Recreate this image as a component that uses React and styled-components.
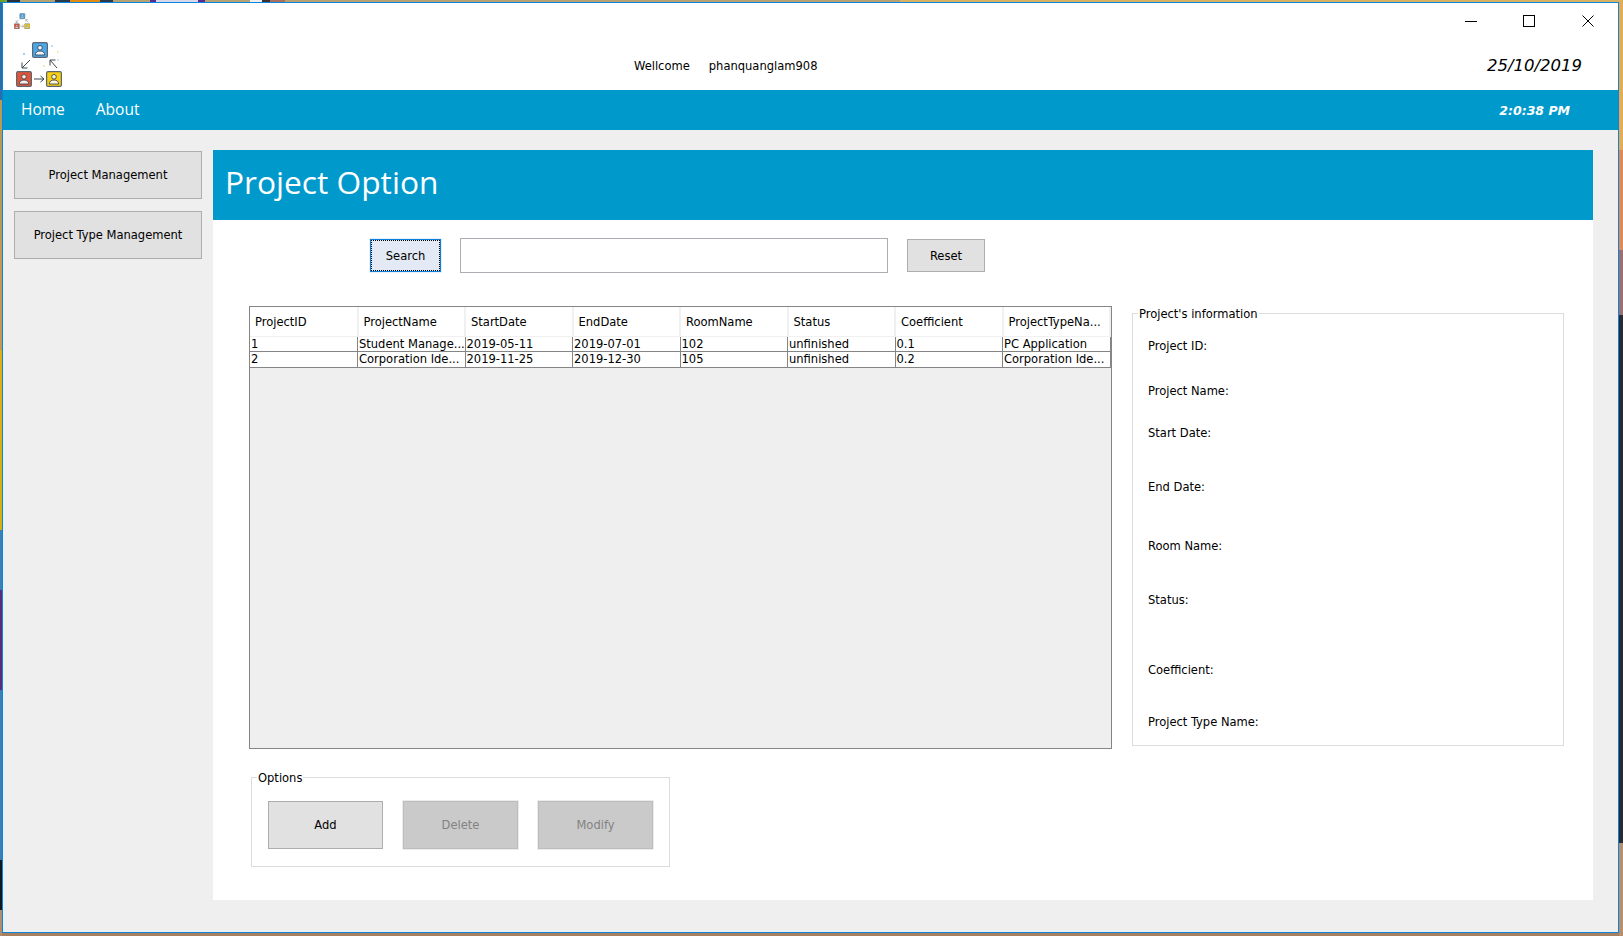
import React from "react";
import styled, { createGlobalStyle } from "styled-components";

const Global = createGlobalStyle`
  html, body { margin: 0; padding: 0; height: 100%; overflow: hidden; }
  body {
    font-family: "DejaVu Sans Condensed", "DejaVu Sans", sans-serif;
    font-stretch: condensed;
    font-size: 12.8px;
    color: #000;
    background:
      linear-gradient(90deg, #6aa51f 0 5px, #8a9a5a 5px 7px, #26303a 7px 20px, #b5a272 20px 55px, #2b3a4a 55px 70px, #e08c14 70px 100px, #2b3a4a 100px 113px, #b5a272 113px 150px, #5a2a8c 150px 156px, #d8d8ea 156px 198px, #5a2a8c 198px 205px, #b5a272 205px 250px, #eee 250px 262px, #3a3030 262px 270px, #a87060 270px 285px, #b8a070 285px 900px, #d8b262 900px) 0 0 / 100% 2px no-repeat,
      linear-gradient(180deg, #2a6ea8 0 100px, #b89a58 100px 240px, #c49a50 240px 350px, #e0b010 350px 440px, #d4b010 440px 530px, #3a7fb5 530px 590px, #5a2a7c 590px 690px, #3a7fb5 690px 860px, #101820 860px 910px, #b08d6c 910px) 0 0 / 2px 100% no-repeat,
      linear-gradient(180deg, #e2ad55 0 150px, #e08a5a 150px 250px, #9a7070 250px 315px, #2a2a30 315px 843px, #b58f6e 843px) 100% 0 / 4px 100% no-repeat,
      #a9805f;
  }
  #root { height: 100%; }
  * { box-sizing: border-box; }
`;

const Desktop = styled.div`
  height: 100%;
  padding: 2px 4px 3px 2px;
`;
const Window = styled.div`
  height: 100%;
  display: flex;
  flex-direction: column;
  border: 1px solid #0a84dc;
  background: #efefef;
`;
const Header = styled.header`
  height: 87px;
  flex: none;
  background: #fff;
  display: flex;
  flex-direction: column;
`;
const TitleBar = styled.div`
  height: 36px;
  display: flex;
  justify-content: space-between;
  padding: 10px 0 0 11px;
`;
const CaptionButtons = styled.div`
  display: flex;
  align-items: flex-start;
  padding: 2px 0 0;
  margin-right: 24px;
  gap: 46px;
`;
const CaptionIcon = styled.svg`
  width: 12px;
  height: 12px;
  display: block;
  fill: none;
  stroke: #000;
  stroke-width: 1;
`;
const CloseIcon = styled(CaptionIcon)`
  margin-left: 1px;
`;
const Brand = styled.div`
  flex: 1;
  display: grid;
  grid-template-columns: 618px auto 1fr auto;
  padding: 0 36px 0 13px;
  align-items: center;
`;
const Greeting = styled.div`
  display: flex;
  gap: 19px;
  grid-column: 2;
  margin-top: 1px;
`;
const DateText = styled.div`
  grid-column: 4;
  font-family: "DejaVu Sans", sans-serif;
  font-style: italic;
  font-size: 16.5px;
  font-stretch: normal;
  margin-top: 1px;
`;
const Nav = styled.nav`
  height: 40px;
  flex: none;
  background: #0099cc;
  color: #fff;
  display: flex;
  align-items: center;
  padding: 0 48px 0 18px;
`;
const NavItem = styled.span`
  font-family: "Open Sans", sans-serif;
  font-stretch: normal;
  font-size: 15.5px;
  margin-right: 31px;
  margin-top: -2px;
`;
const Clock = styled.span`
  margin-left: auto;
  font-family: "DejaVu Sans", sans-serif;
  font-stretch: normal;
  font-style: italic;
  font-weight: 700;
  font-size: 12.5px;
  margin-top: 1px;
`;
const Body = styled.div`
  flex: 1;
  min-height: 0;
  display: flex;
  padding: 20px 25px 32px 11px;
  gap: 11px;
`;
const Sidebar = styled.aside`
  width: 188px;
  flex: none;
  display: flex;
  flex-direction: column;
  gap: 12px;
  padding-top: 1px;
`;
const Button = styled.button`
  font: inherit;
  font-stretch: condensed;
  color: #000;
  background: #e1e1e1;
  border: 1px solid #adadad;
  padding: 0 0 1px;
  flex: none;
  height: ${(p) => p.$h || 48}px;
  width: ${(p) => (p.$w ? `${p.$w}px` : "auto")};
`;
const FocusButton = styled(Button)`
  background: #e3eaf5;
  border: 1px solid #0a7fdc;
  outline: 1px dotted #000;
  outline-offset: -2px;
  box-shadow: 0 0 0 1px #e6f0fa;
`;
const DisabledButton = styled(Button)`
  background: #cacaca;
  border: 1px solid #bdbdbd;
  box-shadow: 0 0 0 1px #ececec;
  color: #838383;
`;
const Main = styled.main`
  flex: 1;
  min-width: 0;
  background: #fff;
  display: flex;
  flex-direction: column;
`;
const Banner = styled.div`
  height: 70px;
  flex: none;
  background: #0099cc;
  color: #fff;
  display: flex;
  align-items: center;
  padding: 0 0 8px 12px;
  font-family: "Open Sans", sans-serif;
  font-stretch: normal;
  font-size: 31.7px;
`;
const SearchRow = styled.div`
  display: flex;
  align-items: center;
  gap: 19px;
  padding: 18px 0 0 157px;
`;
const SearchInput = styled.input`
  width: 428px;
  height: 35px;
  border: 1px solid #abadb3;
  background: #fff;
`;
const Columns = styled.div`
  display: flex;
  gap: 20px;
  padding: 33px 0 0 36px;
`;
const LeftColumn = styled.div`
  width: 863px;
  flex: none;
`;
const TableBox = styled.div`
  height: 443px;
  border: 1px solid #858585;
  background: #efefef;
`;
const Table = styled.table`
  width: 100%;
  table-layout: fixed;
  border-collapse: collapse;
`;
const Th = styled.th`
  height: 29px;
  background: #fff;
  font-weight: 400;
  text-align: left;
  padding: 0 0 0 5px;
  border-right: 2px solid #f0f0f0;
  border-bottom: 1px solid #f0f0f0;
  white-space: nowrap;
  overflow: hidden;
`;
const Tr = styled.tr`
  height: ${(p) => p.$h}px;
`;
const Td = styled.td`
  background: #fff;
  padding: 0 0 0 1px;
  border-right: 1px solid #858585;
  border-bottom: 1px solid #858585;
  white-space: nowrap;
  overflow: hidden;
  line-height: 14px;
`;
const Group = styled.fieldset`
  margin: 0;
  padding: 0;
  min-width: 0;
  border: 1px solid #dcdcdc;
`;
const Legend = styled.legend`
  margin-left: 5px;
  padding: 2px 1px 0;
  line-height: 14px;
`;
const InfoGroup = styled(Group)`
  width: 432px;
  height: 441px;
  margin-top: -1px;
  flex: none;
`;
const InfoList = styled.div`
  display: flex;
  flex-direction: column;
  padding: 18px 0 0 15px;
`;
const InfoLabel = styled.div`
  height: ${(p) => p.$h}px;
  line-height: 14px;
`;
const OptionsGroup = styled(Group)`
  width: 419px;
  height: 98px;
  margin: 20px 0 0 2px;
`;
const OptionsRow = styled.div`
  display: flex;
  gap: 20px;
  padding: 16px 0 0 16px;
`;
const LogoSvg = styled.svg`
  display: block;
  align-self: start;
  margin-top: ${(p) => p.$top}px;
  width: ${(p) => p.$size}px;
  height: ${(p) => p.$size}px;
`;

const Person = ({ x, y, fill, bg }) => (
  <g transform={`translate(${x} ${y})`}>
    <rect x="0.6" y="0.6" width="14.8" height="14.8" rx="1.5" fill={fill} stroke="#5b6670" strokeWidth="1.2" />
    <circle cx="8" cy="5.8" r="2.3" fill={bg} stroke="#3c4650" strokeWidth="0.9" />
    <path d="M3.3 13c0-2.6 2-4 4.7-4s4.700 1.400 4.700 4z" fill={bg} stroke="#3c4650" strokeWidth="0.9" />
  </g>
);

const Logo = ({ size, top = 0 }) => (
  <LogoSvg $size={size} $top={top} viewBox="0 0 46 46">
    <Person x={16} y={1} fill="#4aa8e8" bg="#eef6fc" />
    <Person x={0} y={30} fill="#e05538" bg="#f7ece8" />
    <Person x={30} y={30} fill="#f6cf10" bg="#fdf8dc" />
    <g fill="none" stroke="#3c4650" strokeWidth="1">
      <path d="M14 19l-8 8M6 21.500V27h5.500" />
      <path d="M41 27l-7-8M34 24.500V19h5.500" />
      <path d="M18 38h10M24.500 35l3.500 3-3.500 3" />
    </g>
    <g>
      <rect x="7" y="12" width="2" height="2" fill="#9dd4f5" />
      <rect x="35" y="4" width="2" height="2" fill="#bfe2f8" />
      <rect x="41" y="10" width="1.500" height="1.500" fill="#f7e07a" />
      <rect x="41" y="18" width="2" height="2" fill="#cfe6f7" />
      <rect x="27" y="24" width="2" height="2" fill="#f7ea9c" />
    </g>
  </LogoSvg>
);

const columns = ["ProjectID", "ProjectName", "StartDate", "EndDate", "RoomName", "Status", "Coefficient", "ProjectTypeNa..."];
const rows = [
  ["1", "Student Manage...", "2019-05-11", "2019-07-01", "102", "unfinished", "0.1", "PC Application"],
  ["2", "Corporation Ide...", "2019-11-25", "2019-12-30", "105", "unfinished", "0.2", "Corporation Ide..."],
];
const info = [
  ["Project ID:", 45],
  ["Project Name:", 42],
  ["Start Date:", 54],
  ["End Date:", 59],
  ["Room Name:", 54],
  ["Status:", 70],
  ["Coefficient:", 52],
  ["Project Type Name:", 20],
];

export default function App() {
  return (
    <Desktop>
      <Global />
      <Window>
        <Header>
          <TitleBar>
            <Logo size={16} />
            <CaptionButtons>
              <CaptionIcon viewBox="0 0 12 12"><path d="M0 6.500h12" /></CaptionIcon>
              <CaptionIcon viewBox="0 0 12 12"><rect x="0.500" y="0.500" width="11" height="11" /></CaptionIcon>
              <CloseIcon viewBox="0 0 12 12"><path d="M0.500 0.500l11 11M11.500 0.500l-11 11" /></CloseIcon>
            </CaptionButtons>
          </TitleBar>
          <Brand>
            <Logo size={46} top={2} />
            <Greeting>
              <span>Wellcome</span>
              <span>phanquanglam908</span>
            </Greeting>
            <DateText>25/10/2019</DateText>
          </Brand>
        </Header>
        <Nav>
          <NavItem>Home</NavItem>
          <NavItem>About</NavItem>
          <Clock>2:0:38 PM</Clock>
        </Nav>
        <Body>
          <Sidebar>
            <Button>Project Management</Button>
            <Button>Project Type Management</Button>
          </Sidebar>
          <Main>
            <Banner>Project Option</Banner>
            <SearchRow>
              <FocusButton $w={71} $h={33}>Search</FocusButton>
              <SearchInput />
              <Button $w={78} $h={33}>Reset</Button>
            </SearchRow>
            <Columns>
              <LeftColumn>
                <TableBox>
                  <Table>
                    <thead>
                      <tr>{columns.map((c) => <Th key={c}>{c}</Th>)}</tr>
                    </thead>
                    <tbody>
                      {rows.map((r, i) => (
                        <Tr key={r[0]} $h={i === 0 ? 15 : 16}>
                          {r.map((v, j) => <Td key={j}>{v}</Td>)}
                        </Tr>
                      ))}
                    </tbody>
                  </Table>
                </TableBox>
                <OptionsGroup>
                  <Legend>Options</Legend>
                  <OptionsRow>
                    <Button $w={115}>Add</Button>
                    <DisabledButton $w={115} disabled>Delete</DisabledButton>
                    <DisabledButton $w={115} disabled>Modify</DisabledButton>
                  </OptionsRow>
                </OptionsGroup>
              </LeftColumn>
              <InfoGroup>
                <Legend>Project's information</Legend>
                <InfoList>
                  {info.map(([t, h]) => <InfoLabel key={t} $h={h}>{t}</InfoLabel>)}
                </InfoList>
              </InfoGroup>
            </Columns>
          </Main>
        </Body>
      </Window>
    </Desktop>
  );
}
